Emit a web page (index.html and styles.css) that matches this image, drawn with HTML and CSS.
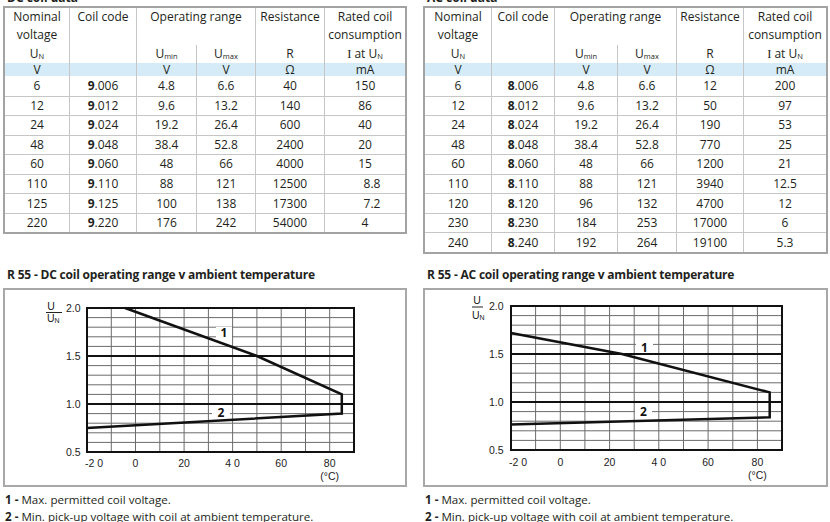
FILE: index.html
```html
<!DOCTYPE html>
<html lang="en">
<head>
<meta charset="utf-8">
<title>R 55 coil data</title>
<link rel="stylesheet" href="styles.css">
</head>
<body>
<div class="page">
  <section class="data-block">
    <h2 class="data-title">DC coil data</h2>
    <table class="coil dc">
      <colgroup><col class="k1"><col class="k2"><col class="k3"><col class="k4"><col class="k5"><col class="k6"></colgroup>
      <thead>
        <tr class="h1"><th>Nominal<br>voltage</th><th>Coil code</th><th colspan="2">Operating range</th><th>Resistance</th><th>Rated coil<br>consumption</th></tr>
        <tr class="h2"><th>U<sub>N</sub></th><th></th><th>U<sub>min</sub></th><th>U<sub>max</sub></th><th>R</th><th><span class="serif">I</span> at U<sub>N</sub></th></tr>
        <tr class="unit"><td>V</td><td></td><td>V</td><td>V</td><td>Ω</td><td>mA</td></tr>
      </thead>
      <tbody>
        <tr><td>6</td><td><b>9</b>.006</td><td>4.8</td><td>6.6</td><td>40</td><td>150</td></tr>
        <tr><td>12</td><td><b>9</b>.012</td><td>9.6</td><td>13.2</td><td>140</td><td>86</td></tr>
        <tr><td>24</td><td><b>9</b>.024</td><td>19.2</td><td>26.4</td><td>600</td><td>40</td></tr>
        <tr><td>48</td><td><b>9</b>.048</td><td>38.4</td><td>52.8</td><td>2400</td><td>20</td></tr>
        <tr><td>60</td><td><b>9</b>.060</td><td>48</td><td>66</td><td>4000</td><td>15</td></tr>
        <tr><td>110</td><td><b>9</b>.110</td><td>88</td><td>121</td><td>12500</td><td class="dec">8.8</td></tr>
        <tr><td>125</td><td><b>9</b>.125</td><td>100</td><td>138</td><td>17300</td><td class="dec">7.2</td></tr>
        <tr><td>220</td><td><b>9</b>.220</td><td>176</td><td>242</td><td>54000</td><td>4</td></tr>
      </tbody>
    </table>
  </section>

  <section class="data-block">
    <h2 class="data-title">AC coil data</h2>
    <table class="coil ac">
      <colgroup><col class="k1"><col class="k2"><col class="k3"><col class="k4"><col class="k5"><col class="k6"></colgroup>
      <thead>
        <tr class="h1"><th>Nominal<br>voltage</th><th>Coil code</th><th colspan="2">Operating range</th><th>Resistance</th><th>Rated coil<br>consumption</th></tr>
        <tr class="h2"><th>U<sub>N</sub></th><th></th><th>U<sub>min</sub></th><th>U<sub>max</sub></th><th>R</th><th><span class="serif">I</span> at U<sub>N</sub></th></tr>
        <tr class="unit"><td>V</td><td></td><td>V</td><td>V</td><td>Ω</td><td>mA</td></tr>
      </thead>
      <tbody>
        <tr><td>6</td><td><b>8</b>.006</td><td>4.8</td><td>6.6</td><td>12</td><td>200</td></tr>
        <tr><td>12</td><td><b>8</b>.012</td><td>9.6</td><td>13.2</td><td>50</td><td>97</td></tr>
        <tr><td>24</td><td><b>8</b>.024</td><td>19.2</td><td>26.4</td><td>190</td><td>53</td></tr>
        <tr><td>48</td><td><b>8</b>.048</td><td>38.4</td><td>52.8</td><td>770</td><td>25</td></tr>
        <tr><td>60</td><td><b>8</b>.060</td><td>48</td><td>66</td><td>1200</td><td>21</td></tr>
        <tr><td>110</td><td><b>8</b>.110</td><td>88</td><td>121</td><td>3940</td><td>12.5</td></tr>
        <tr><td>120</td><td><b>8</b>.120</td><td>96</td><td>132</td><td>4700</td><td>12</td></tr>
        <tr><td>230</td><td><b>8</b>.230</td><td>184</td><td>253</td><td>17000</td><td>6</td></tr>
        <tr><td>240</td><td><b>8</b>.240</td><td>192</td><td>264</td><td>19100</td><td>5.3</td></tr>
      </tbody>
    </table>
  </section>

  <h3 class="chart-title">R 55 - DC coil operating range v ambient temperature</h3>
  <h3 class="chart-title">R 55 - AC coil operating range v ambient temperature</h3>

  <div class="chart-box">
    <svg class="plot" width="400" height="195" viewBox="0 0 400 195">
      <path class="minor" d="M106.3 18V162M130.5 18V162M154.8 18V162M179.1 18V162M203.4 18V162M227.6 18V162M251.9 18V162M276.2 18V162M300.5 18V162M324.7 18V162M82 27.6H349M82 37.2H349M82 46.8H349M82 56.4H349M82 75.6H349M82 85.2H349M82 94.8H349M82 104.4H349M82 123.6H349M82 133.2H349M82 142.8H349M82 152.4H349"/>
      <path class="major" d="M82 66H349M82 114H349"/>
      <rect class="frame" x="82" y="18" width="267" height="144"/>
      <polyline class="curve" points="120.1,18 251.9,66 336.8,104.4 336.8,123.6 82,138"/>
      <rect class="tag" x="211" y="37" width="16" height="11"/>
      <text class="tag-t" x="219" y="47.2">1</text>
      <rect class="tag" x="207" y="118" width="18" height="10"/>
      <text class="tag-t" x="216" y="127.4">2</text>
      <text class="axis" x="46" y="19.5" text-anchor="middle">U</text>
      <path class="frac" d="M41 22.5H57"/>
      <text class="axis" x="42" y="31.5">U<tspan class="sub" dy="1">N</tspan></text>
      <text class="tick" x="75.5" y="21.8" text-anchor="end">2.0</text>
      <text class="tick" x="75.5" y="69.8" text-anchor="end">1.5</text>
      <text class="tick" x="75.5" y="117.8" text-anchor="end">1.0</text>
      <text class="tick" x="75.5" y="165.8" text-anchor="end">0.5</text>
      <text class="tick" x="89" y="176.8" text-anchor="middle">-2 0</text>
      <text class="tick" x="130.5" y="176.8" text-anchor="middle">0</text>
      <text class="tick" x="179.1" y="176.8" text-anchor="middle">20</text>
      <text class="tick" x="227.6" y="176.8" text-anchor="middle">4 0</text>
      <text class="tick" x="276.2" y="176.8" text-anchor="middle">60</text>
      <text class="tick" x="324.7" y="176.8" text-anchor="middle">80</text>
      <text class="tick" x="324.7" y="189.8" text-anchor="middle">(°C)</text>
    </svg>
  </div>
  <div class="chart-box">
    <svg class="plot" width="401" height="195" viewBox="0 0 401 195">
      <path class="minor" d="M110.6 16V160M135.3 16V160M159.9 16V160M184.6 16V160M209.2 16V160M233.8 16V160M258.5 16V160M283.1 16V160M307.8 16V160M332.4 16V160M86 25.6H357M86 35.2H357M86 44.8H357M86 54.4H357M86 73.6H357M86 83.2H357M86 92.8H357M86 102.4H357M86 121.6H357M86 131.2H357M86 140.8H357M86 150.4H357"/>
      <path class="major" d="M86 64H357M86 112H357"/>
      <rect class="frame" x="86" y="16" width="271" height="144"/>
      <polyline class="curve" points="86,42.9 196.9,64 344.7,102.4 344.7,127.4 86,134.6"/>
      <rect class="tag" x="211" y="52" width="17" height="10"/>
      <text class="tag-t" x="219.5" y="61.6">1</text>
      <rect class="tag" x="210" y="117" width="17" height="9"/>
      <text class="tag-t" x="218.5" y="125.8">2</text>
      <text class="axis" x="52" y="13.5" text-anchor="middle">U</text>
      <path class="frac" d="M47 17H58"/>
      <text class="axis" x="47" y="28.5">U<tspan class="sub" dy="1">N</tspan></text>
      <text class="tick" x="78.5" y="19.8" text-anchor="end">2.0</text>
      <text class="tick" x="78.5" y="67.8" text-anchor="end">1.5</text>
      <text class="tick" x="78.5" y="115.8" text-anchor="end">1.0</text>
      <text class="tick" x="78.5" y="163.8" text-anchor="end">0.5</text>
      <text class="tick" x="93" y="175.8" text-anchor="middle">-2 0</text>
      <text class="tick" x="135.3" y="175.8" text-anchor="middle">0</text>
      <text class="tick" x="184.6" y="175.8" text-anchor="middle">20</text>
      <text class="tick" x="233.8" y="175.8" text-anchor="middle">4 0</text>
      <text class="tick" x="283.1" y="175.8" text-anchor="middle">60</text>
      <text class="tick" x="332.4" y="175.8" text-anchor="middle">80</text>
      <text class="tick" x="332.4" y="188.8" text-anchor="middle">(°C)</text>
    </svg>
  </div>

  <ul class="legend">
    <li><b>1 -</b> Max. permitted coil voltage.</li>
    <li><b>2 -</b> Min. pick-up voltage with coil at ambient temperature.</li>
  </ul>
  <ul class="legend">
    <li><b>1 -</b> Max. permitted coil voltage.</li>
    <li><b>2 -</b> Min. pick-up voltage with coil at ambient temperature.</li>
  </ul>
</div>
</body>
</html>
```

FILE: styles.css
```css
* { box-sizing: border-box; margin: 0; padding: 0; }

html, body { background: #fff; }

body {
  margin: 0;
  width: 830px;
  height: 522px;
  overflow: hidden;
  font-family: "Open Sans", "Noto Sans", sans-serif;
  color: #231f20;
}

.page {
  display: grid;
  grid-template-columns: 404px 405px;
  column-gap: 16px;
  padding-left: 3px;
  align-items: start;
}

.data-title {
  font-size: 12px;
  font-weight: 700;
  line-height: 14px;
  height: 14px;
  margin-top: -9px;
  margin-bottom: 1px;
  padding-left: 4px;
}

.coil {
  border-collapse: separate;
  border-spacing: 0;
  table-layout: fixed;
  border: 2px solid #a3a3a3;
  font-size: 12px;
}
.coil.dc { width: 404px; }
.coil.ac { width: 405px; }

.dc .k1 { width: 64px; } .dc .k2 { width: 67px; } .dc .k3 { width: 60px; }
.dc .k4 { width: 59px; } .dc .k5 { width: 69px; } .dc .k6 { width: 81px; }
.ac .k1 { width: 66px; } .ac .k2 { width: 63px; } .ac .k3 { width: 63px; }
.ac .k4 { width: 59px; } .ac .k5 { width: 67px; } .ac .k6 { width: 83px; }

.coil th, .coil td {
  padding: 0;
  text-align: center;
  font-weight: 400;
  border-left: 1px solid #c6c6c6;
  vertical-align: middle;
  white-space: nowrap;
}
.coil tr > :first-child { border-left: none; }

.coil .h1 th { height: 37px; line-height: 18px; vertical-align: top; }
.coil .h2 th { height: 18px; line-height: 18px; }
.coil .unit td { height: 13px; line-height: 13px; background: #d5ebf8; }

.coil tbody td {
  height: 19.56px;
  line-height: 16px;
  border-top: 1px solid #c6c6c6;
}
.coil tbody tr:first-child td { border-top: none; }
.coil b { font-weight: 700; }
.coil .dec { padding-left: 14px; }

.coil sub {
  font-size: 7.5px;
  line-height: 0;
  vertical-align: -1px;
}
.serif { font-family: "Liberation Serif", serif; font-size: 12.5px; }

.chart-title {
  font-size: 12px;
  font-weight: 700;
  line-height: 16px;
  margin-top: 13px;
  padding-left: 4px;
  letter-spacing: -0.2px;
}

.chart-box {
  margin-top: 5px;
  height: 199px;
  border: 2px solid #a8a8a8;
}
.plot { display: block; }

.minor { fill: none; stroke: #6c6c6c; stroke-width: 1; }
.major { fill: none; stroke: #111; stroke-width: 2; }
.frame { fill: none; stroke: #111; stroke-width: 2; }
.curve { fill: none; stroke: #111; stroke-width: 2.5; stroke-linejoin: miter; }
.tag { fill: #fff; }
.tag-t { font-family: "Open Sans", sans-serif; font-weight: 700; font-size: 12px; text-anchor: middle; fill: #111; }
.frac { stroke: #222; stroke-width: 1; }
.axis { font-family: "Liberation Sans", Arial, sans-serif; font-size: 10.5px; fill: #222; }
.axis .sub { font-size: 7px; }
.tick { font-family: "Liberation Sans", Arial, sans-serif; font-size: 10.5px; fill: #222; }

.legend {
  list-style: none;
  margin-top: 4.5px;
  padding-left: 2px;
  font-size: 11.6px;
  line-height: 17px;
}
.legend b { font-weight: 700; }
```
